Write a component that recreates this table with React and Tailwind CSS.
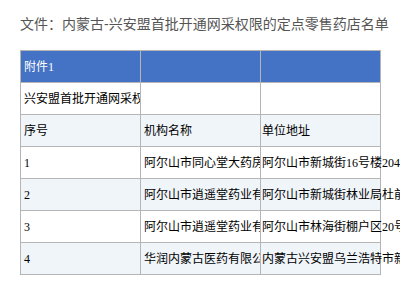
const rows = [
  { a: '1', b: '阿尔山市同心堂大药房', c: '阿尔山市新城街16号楼204' },
  { a: '2', b: '阿尔山市逍遥堂药业有限公司', c: '阿尔山市新城街林业局杜前' },
  { a: '3', b: '阿尔山市逍遥堂药业有限公司', c: '阿尔山市林海街棚户区20号' },
  { a: '4', b: '华润内蒙古医药有限公司', c: '内蒙古兴安盟乌兰浩特市新' },
]

const cell = 'h-[32px] border-r border-b border-[#b5b5b5] flex items-center whitespace-nowrap'

function Row({ bg, a, b, c, text = 'text-black' }) {
  return (
    <div className={`grid grid-cols-[120px_120px_120px] ${bg} ${text}`}>
      <div className={`${cell} overflow-hidden pl-[3px]`}>{a}</div>
      <div className={`${cell} overflow-hidden pl-[3px]`}>{b}</div>
      <div className={`${cell} overflow-visible pl-[1px]`}>{c}</div>
    </div>
  )
}

export default function App() {
  return (
    <div className="w-[400px] h-[304px] overflow-hidden bg-white">
      <h1 className="pl-[20px] pt-[16px] text-[14px] leading-[16px] text-[#555] font-['Liberation_Sans','Noto_Sans_CJK_SC',sans-serif] whitespace-nowrap">
        文件：内蒙古-兴安盟首批开通网采权限的定点零售药店名单
      </h1>
      <div className="ml-[20px] mt-[18px] w-[361px] border-t border-l border-[#b5b5b5] text-[12px] font-['Liberation_Serif','Noto_Sans_CJK_SC',serif]">
        <Row bg="bg-[#4472c4]" text="text-white" a="附件1" b="" c="" />
        <Row bg="bg-white" a="兴安盟首批开通网采权限的定点零售药店名单" b="" c="" />
        <Row bg="bg-[#f0f5fa]" a="序号" b="机构名称" c="单位地址" />
        {rows.map((r, i) => (
          <Row key={r.a} bg={i % 2 ? 'bg-[#f0f5fa]' : 'bg-white'} a={r.a} b={r.b} c={r.c} />
        ))}
      </div>
    </div>
  )
}
